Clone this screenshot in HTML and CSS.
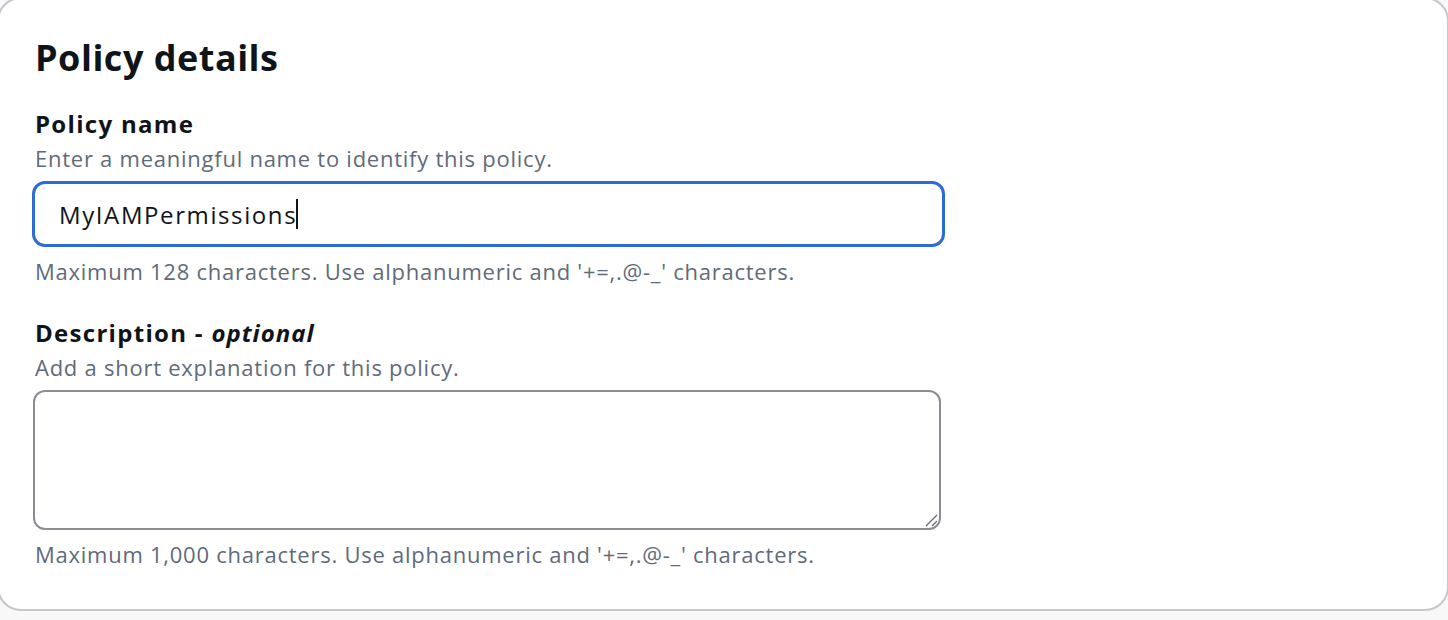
FILE: index.html
```html
<!DOCTYPE html>
<html>
<head>
<meta charset="utf-8">
<link rel="stylesheet" href="styles.css">
</head>
<body>
<div class="card">
  <h2 class="title">Policy details</h2>
  <div class="field">
    <div class="label">Policy name</div>
    <div class="desc">Enter a meaningful name to identify this policy.</div>
    <div class="input"><span class="value">MyIAMPermissions</span><span class="caret"></span></div>
    <div class="hint">Maximum 128 characters. Use alphanumeric and '+=,.@-_' characters.</div>
  </div>
  <div class="field field2">
    <div class="label">Description - <em>optional</em></div>
    <div class="desc">Add a short explanation for this policy.</div>
    <div class="textarea"><svg class="grip" width="14" height="14" viewBox="0 0 14 14"><path d="M2 13 L13 2 M8 13 L13 8" stroke="#6b6b73" stroke-width="1.3" fill="none"/></svg></div>
    <div class="hint hint2">Maximum 1,000 characters. Use alphanumeric and '+=,.@-_' characters.</div>
  </div>
</div>
</body>
</html>
```
FILE: styles.css
```css
html, body { margin: 0; padding: 0; }
body {
  background: #f8f8f9;
  font-family: "Open Sans", "Noto Sans", sans-serif;
  color: #0f141a;
  height: 620px;
  overflow: hidden;
}
.card {
  margin: -3px 0 0 -3px;
  width: 1452px;
  height: 614px;
  box-sizing: border-box;
  background: #fff;
  border: 2px solid #c6c6cd;
  border-radius: 24px;
  padding: 33px 0 0 36px;
}
.title {
  margin: 0;
  font-size: 36px;
  font-weight: 700;
  line-height: 52px;
  letter-spacing: 0.5px;
}
.field { margin-top: 24px; width: 910px; }
.field2 { margin-top: 32px; }
.label {
  font-size: 24px;
  font-weight: 700;
  line-height: 32px;
  letter-spacing: 1.3px;
}
.label em { font-weight: 700; font-style: italic; letter-spacing: 1px; }
.desc, .hint {
  font-size: 22px;
  line-height: 28px;
  color: #5f6b7a;
  letter-spacing: 0.75px;
}
.desc { margin-top: 4px; }
.input {
  margin-top: 9px;
  margin-left: -3px;
  height: 66px;
  box-sizing: border-box;
  border: 3px solid #2f6bd6;
  border-radius: 13px;
  display: flex;
  align-items: center;
  padding-left: 24px;
  font-size: 24px;
  letter-spacing: 1.6px;
}
.value { color: #0f141a; }
.caret { display: inline-block; width: 2px; height: 30px; background: #0f141a; margin-left: -1px; }
.hint { margin-top: 10px; }
.hint2 { margin-top: 10px; }
.textarea {
  margin-top: 9px;
  margin-left: -2px;
  width: 908px;
  height: 140px;
  box-sizing: border-box;
  border: 2px solid #8c8c94;
  border-radius: 12px;
  position: relative;
}
.grip { position: absolute; right: 1px; bottom: 1px; }
```
